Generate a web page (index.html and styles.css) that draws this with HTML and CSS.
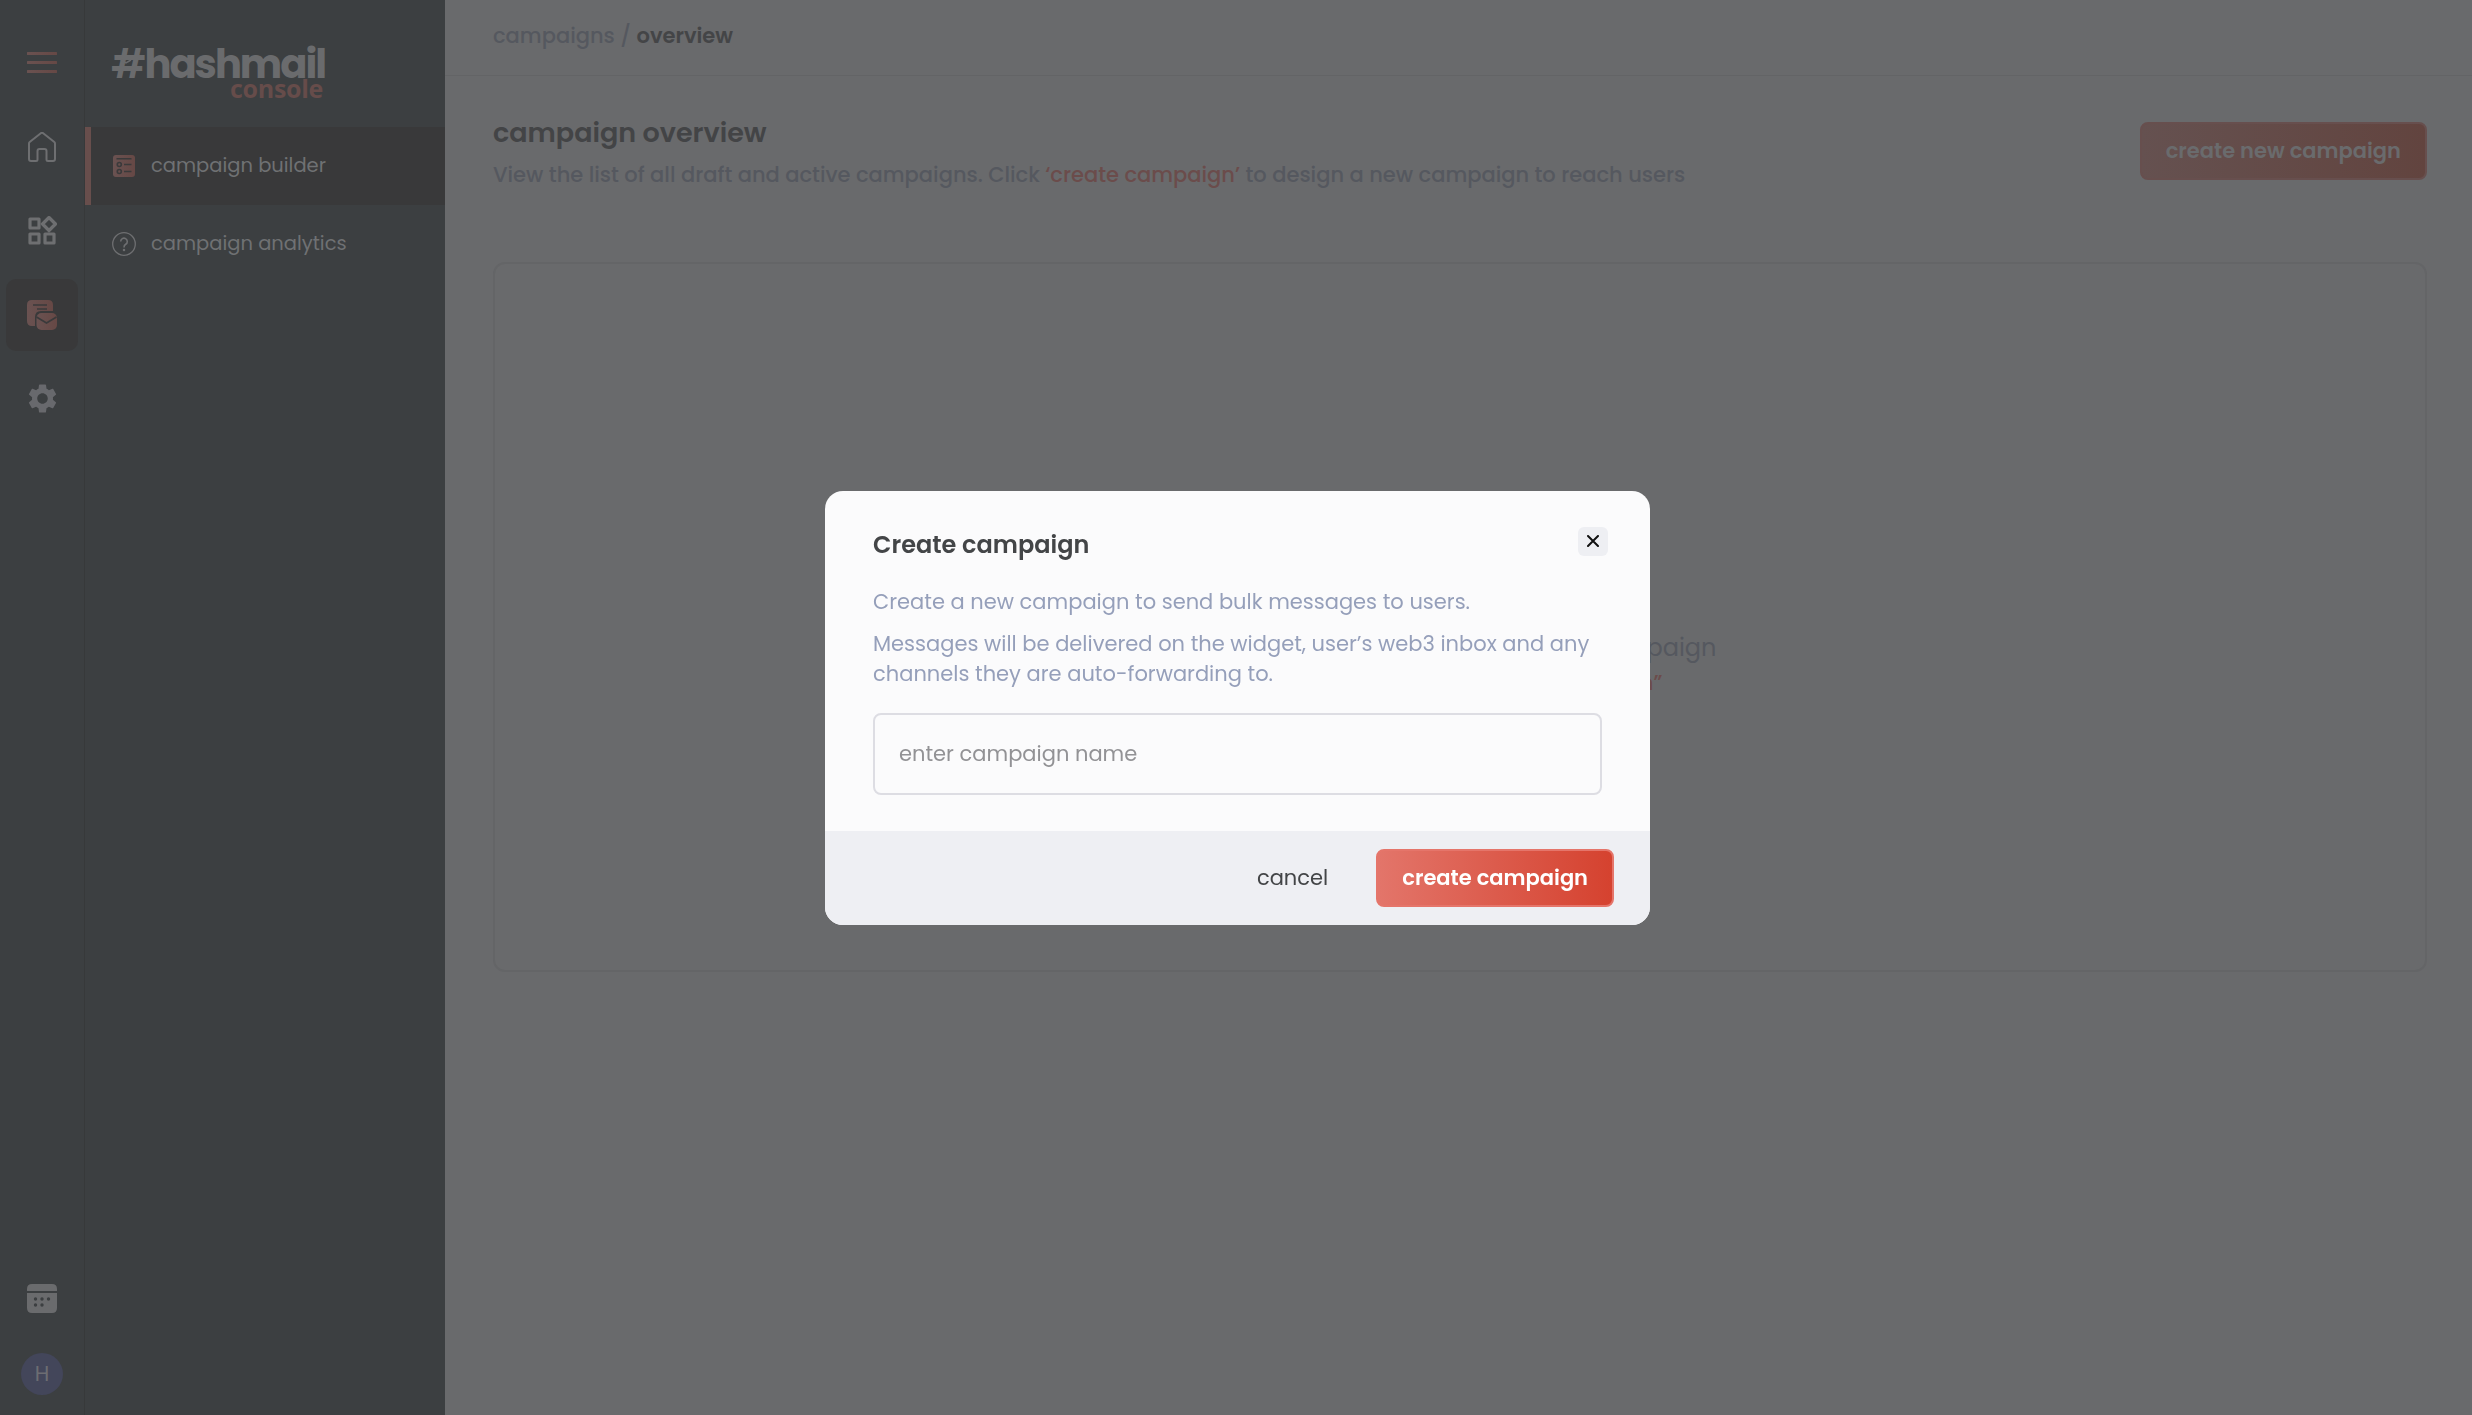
FILE: index.html
```html
<!DOCTYPE html>
<html lang="en">
<head>
  <meta charset="UTF-8" />
  <title>hashmail console</title>
  <link rel="stylesheet" href="styles.css">
</head>
<body>
  <svg width="0" height="0" class="defs">
    <linearGradient id="red" x1="0" x2="1" y1="0" y2="0">
      <stop offset="0" stop-color="#6a5251" />
      <stop offset="1" stop-color="#664845" />
    </linearGradient>
  </svg>

  <div class="app">
    <nav class="rail">
      <a class="rail-item"><svg width="30" height="22" viewBox="0 0 30 22"><path d="M1 0h28a1.5 1.5 0 0 1 0 3H1a1.5 1.5 0 0 1 0-3zM1 9h28a1.5 1.5 0 0 1 0 3H1a1.5 1.5 0 0 1 0-3zM1 18h28a1.5 1.5 0 0 1 0 3H1a1.5 1.5 0 0 1 0-3z" fill="url(#red)" /></svg></a>
      <a class="rail-item"><svg width="30" height="30" viewBox="0 0 30 30" fill="none" stroke="#6e6f71" stroke-width="2" stroke-linejoin="round"><path d="M2 11.5Q2 10.6 2.7 10L13.8 1.2Q15 .3 16.2 1.2L27.3 10Q28 10.6 28 11.500V27Q28 29 26 29H21Q19.500 29 19.500 27.500V19Q19.500 17 17.500 17H12.500Q10.500 17 10.500 19V27.500Q10.500 29 9 29H4Q2 29 2 27z" /></svg></a>
      <a class="rail-item"><svg width="30" height="30" viewBox="0 0 30 30" fill="none" stroke="#6e6f71" stroke-width="3.2" stroke-linejoin="round"><path d="M3 3h9v9H3zM3 18h9v9H3zM18 18h9v9h-9zM22 1.500l6.500 6.500-6.500 6.500-6.500-6.500z" /></svg></a>
      <a class="rail-item active"><svg width="30" height="30" viewBox="0 0 30 30"><path d="M5 0h16q5 0 5 5v6H14q-6 0-6 6v9H5q-5 0-5-5V5q0-5 5-5z" fill="url(#red)" /><rect x="9.500" y="13" width="20.500" height="17" rx="5" fill="url(#red)" /><path d="M6 5h14M10 9h10M9.500 17l10 6 10-6" fill="none" stroke="#3a3a3b" stroke-width="1.7" /></svg></a>
      <a class="rail-item gear"><svg width="35" height="35" viewBox="0 0 24 24" fill="#68696d"><path d="M19.140 12.940c.04-.3.06-.61.06-.94 0-.32-.02-.64-.07-.94l2.030-1.580c.18-.14.23-.41.12-.61l-1.920-3.320c-.12-.22-.37-.29-.59-.22l-2.390.96c-.5-.38-1.030-.7-1.620-.94l-.36-2.540c-.04-.24-.24-.41-.48-.41h-3.840c-.24 0-.43.17-.47.41l-.36 2.540c-.59.24-1.130.57-1.620.94l-2.390-.96c-.22-.08-.47 0-.59.22L2.740 8.870c-.12.21-.08.47.12.61l2.030 1.580c-.05.3-.09.63-.09.94s.02.64.07.94l-2.030 1.580c-.18.14-.23.41-.12.61l1.920 3.320c.12.22.37.29.59.22l2.390-.96c.5.38 1.030.7 1.620.94l.36 2.540c.05.24.24.41.48.41h3.840c.24 0 .44-.17.47-.41l.36-2.540c.59-.24 1.130-.56 1.620-.94l2.390.96c.22.08.47 0 .59-.22l1.920-3.320c.12-.22.07-.47-.12-.61l-2.010-1.580zM12 15.600c-1.980 0-3.600-1.620-3.600-3.600s1.620-3.600 3.600-3.600 3.600 1.620 3.600 3.600-1.620 3.600-3.600 3.600z" /></svg></a>

      <div class="rail-bottom">
        <svg width="30" height="30" viewBox="0 0 30 30"><path d="M5 0h20q5 0 5 5v2H0V5q0-5 5-5zM0 9h30v15q0 5-5 5H5q-5 0-5-5z" fill="#6a6b6d" /><g fill="#3c3f41"><circle cx="8.500" cy="15" r="1.700" /><circle cx="15" cy="15" r="1.700" /><circle cx="21.500" cy="15" r="1.700" /><circle cx="8.500" cy="21" r="1.700" /><circle cx="15" cy="21" r="1.700" /></g></svg>
        <div class="avatar">H</div>
      </div>
    </nav>

    <aside class="sidebar">
      <div class="logo">
        <div class="logo-name"><span>#</span>hashmail</div>
        <div class="logo-sub">console</div>
        <svg class="logo-mail" width="12" height="6" viewBox="0 0 12 6"><path d="M1 1l5 3 5-3" fill="none" stroke="#6a6b6d" stroke-width="1.5" /></svg>
      </div>
      <a class="menu-item active">
        <svg width="24" height="24" viewBox="0 0 24 24"><rect x="1" y="1" width="22" height="22" rx="3" fill="url(#red)" /><g fill="none" stroke="#3a3a3b" stroke-width="1.6"><path d="M4.500 4.800h15M12 10.500h7.500M12 17.500h7.500" /><circle cx="7.300" cy="10.500" r="2" /><circle cx="7.300" cy="17.500" r="2" /></g></svg>
        <span>campaign builder</span>
      </a>
      <a class="menu-item">
        <svg width="24" height="24" viewBox="0 0 24 24" fill="none" stroke="#6e6f71" stroke-width="1.3"><circle cx="12" cy="12" r="11.300" /><path d="M8.700 9.500a3.300 3.300 0 1 1 5 2.800c-1.300.8-1.700 1.400-1.700 3.200" stroke-width="1.6" /><circle cx="12" cy="18" r=".6" fill="#6e6f71" /></svg>
        <span>campaign analytics</span>
      </a>
    </aside>

    <main class="main">
      <header class="breadcrumb">campaigns / <b>overview</b></header>
      <section class="content">
        <div class="page-head">
          <div>
            <h1>campaign overview</h1>
            <p>View the list of all draft and active campaigns. Click <em>‘create campaign’</em> to design a new campaign to reach users</p>
          </div>
          <button class="btn btn-dim">create new campaign</button>
        </div>
        <div class="card">
          <p class="empty">you haven’t created or sent any campaign</p>
          <p class="empty-hint">to get started click “create campaign”</p>
        </div>
      </section>
    </main>
  </div>

  <div class="overlay">
    <div class="modal">
      <div class="modal-body">
        <div class="modal-head">
          <h2>Create campaign</h2>
          <button class="close"><svg width="12" height="12" viewBox="0 0 12 12"><path d="M1 1l10 10M11 1L1 11" stroke="#111" stroke-width="2" stroke-linecap="round" /></svg></button>
        </div>
        <p class="first">Create a new campaign to send bulk messages to users.</p>
        <p class="second">Messages will be delivered on the widget, user’s web3 inbox and any channels they are auto-forwarding to.</p>
        <div class="field">enter campaign name</div>
      </div>
      <div class="modal-footer">
        <button class="cancel">cancel</button>
        <button class="btn">create campaign</button>
      </div>
    </div>
  </div>
</body>
</html>
```
FILE: styles.css
```css
* {
  box-sizing: border-box;
}

body {
  margin: 0;
  background: #696a6c;
  font-family: Poppins, Inter, sans-serif;
  font-size: 21px;
  overflow: hidden;
}

h1, h2, p {
  margin: 0;
}

button {
  border: none;
  padding: 0;
  background: none;
  font: inherit;
  white-space: nowrap;
}

.defs {
  position: absolute;
}

.app {
  display: flex;
  height: 100vh;
}

/* left icon rail */
.rail {
  width: 85px;
  padding: 27px 6px 20px;
  background: #3c3f41;
  border-right: 1px solid #37393a;
  display: flex;
  flex-direction: column;
  align-items: center;
  gap: 12px;
}

.rail-item {
  width: 72px;
  height: 72px;
  border-radius: 10px;
  display: flex;
  align-items: center;
  justify-content: center;
}

.rail-item.active {
  background: #39393a;
}

.rail-item.gear {
  padding-bottom: 2px;
}

.rail-bottom {
  margin-top: auto;
  display: flex;
  flex-direction: column;
  align-items: center;
  gap: 39px;
}

.avatar {
  width: 42px;
  height: 42px;
  border-radius: 50%;
  background: #43465a;
  color: #6c6d72;
  line-height: 42px;
  text-align: center;
}

/* menu */
.sidebar {
  width: 360px;
  background: #3c3f41;
}

.logo {
  position: relative;
  height: 127px;
  width: 240px;
  padding-top: 46px;
  color: #6a6b6d;
}

.logo-name {
  font-size: 40px;
  font-weight: 700;
  letter-spacing: -2px;
  line-height: 36px;
  text-align: right;
}

.logo-name span {
  font-weight: 600;
}

.logo-sub {
  margin-top: -6px;
  padding-right: 2px;
  font-family: "Open Sans", sans-serif;
  font-size: 25px;
  font-weight: 700;
  letter-spacing: -0.3px;
  line-height: 24px;
  text-align: right;
  color: #664c4a;
}

.logo-mail {
  position: absolute;
  left: 35px;
  top: 59px;
}

.menu-item {
  height: 78px;
  padding-left: 27px;
  display: flex;
  align-items: center;
  gap: 15px;
  color: #6f7173;
  font-size: 19.5px;
}

.menu-item span {
  padding-bottom: 2px;
}

.menu-item.active {
  background: #39393a;
  border-left: 6px solid #684e4c;
  padding-left: 21px;
}

/* page */
.main {
  flex: 1;
}

.breadcrumb {
  height: 76px;
  padding-left: 48px;
  border-bottom: 1px solid #636466;
  line-height: 71px;
  font-weight: 500;
  color: #55585f;
}

.breadcrumb b {
  font-weight: 600;
  color: #444547;
}

.content {
  padding: 37px 45px 0 48px;
}

.page-head {
  height: 149px;
  display: flex;
  justify-content: space-between;
  align-items: flex-start;
}

.page-head h1 {
  font-size: 27px;
  font-weight: 600;
  line-height: 40px;
  color: #434446;
}

.page-head p {
  margin-top: 2px;
  font-weight: 500;
  line-height: 40px;
  color: #55585f;
}

.page-head em {
  font-style: normal;
  color: #6b4c4b;
}

.btn {
  height: 58px;
  padding: 0 24px 1px;
  border: 2px solid #e5756a;
  border-radius: 8px;
  background: linear-gradient(90deg, #e3756a, #d5422f);
  color: #fff;
  font-weight: 600;
}

.btn-dim {
  margin-top: 9px;
  border-color: #674f4e;
  background: linear-gradient(90deg, #655150, #62443f);
  color: #6a6b6d;
}

.card {
  height: 710px;
  padding-top: 366px;
  border: 2px solid #646567;
  border-radius: 12px;
  text-align: center;
  color: #55585f;
}

.empty {
  font-size: 24px;
  line-height: 36px;
}

.empty-hint {
  font-weight: 500;
  line-height: 33px;
  color: #6b4c4b;
}

/* dialog */
.overlay {
  position: fixed;
  inset: 0;
  padding: 1px 0 0 3px;
  display: flex;
  align-items: center;
  justify-content: center;
}

.modal {
  width: 825px;
  border-radius: 18px;
  background: #fbfbfc;
  overflow: hidden;
}

.modal-body {
  padding: 36px 48px;
  color: #959fba;
  line-height: 30px;
}

.modal-head {
  display: flex;
  justify-content: space-between;
  align-items: flex-start;
}

.modal-head h2 {
  font-size: 24px;
  font-weight: 600;
  line-height: 36px;
  color: #434547;
}

.close {
  width: 30px;
  height: 29px;
  margin-right: -6px;
  padding-bottom: 2px;
  border-radius: 6px;
  background: #eeeff3;
  display: flex;
  align-items: center;
  justify-content: center;
}

.first {
  margin-top: 24px;
}

.second {
  margin-top: 12px;
}

.field {
  height: 82px;
  margin-top: 24px;
  padding-left: 24px;
  border: 2px solid #dddde3;
  border-radius: 8px;
  line-height: 78px;
  color: #929295;
}

.modal-footer {
  height: 94px;
  padding: 0 36px;
  background: #eeeff3;
  display: flex;
  align-items: center;
  justify-content: flex-end;
  gap: 48px;
}

.cancel {
  padding-bottom: 1px;
  color: #434547;
}
```
